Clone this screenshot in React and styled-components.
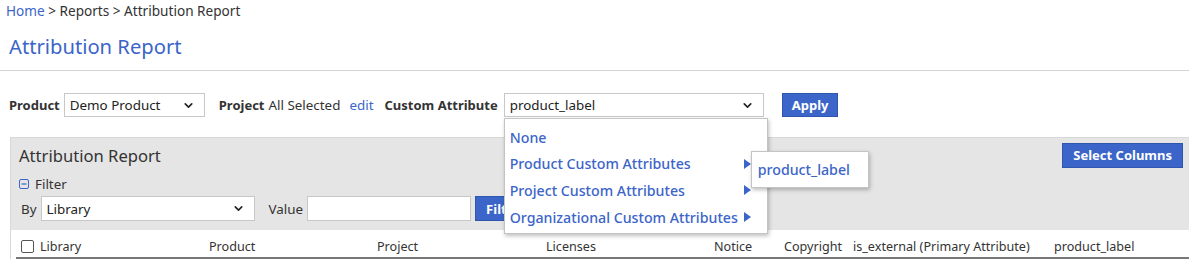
import React from 'react';
import styled, { createGlobalStyle } from 'styled-components';
import { ChevronDown } from 'lucide-react';

const BLUE = '#3b65c8';

const Global = createGlobalStyle`
    body {
        margin: 0;
        font-family: "Noto Sans", "Open Sans", "Liberation Sans", sans-serif;
        font-size: 13.4px;
        color: #333;
        background: #fff;
    }
`;

const Breadcrumb = styled.div`
    padding: 2px 6px 0;
    line-height: 17px;
    font-size: 13.6px;
    color: #333;

    a {
        color: ${BLUE};
        text-decoration: none;
    }
`;

const PageTitle = styled.h1`
    margin: 0;
    padding: 13px 9px 10px;
    font-size: 20.2px;
    line-height: 28px;
    font-weight: 400;
    color: ${BLUE};
    border-bottom: 1px solid #d3d3d3;
`;

const Toolbar = styled.div`
    display: flex;
    align-items: center;
    margin-top: 22px;
    padding-left: 9px;
    height: 24px;
`;

const Label = styled.span`
    font-weight: 700;
    font-size: 13px;
    margin-right: ${(p) => p.$gap || 4}px;
`;

const Plain = styled.span`
    margin-right: ${(p) => p.$gap || 0}px;
`;

const LinkText = styled.span`
    color: ${BLUE};
    margin-right: ${(p) => p.$gap || 0}px;
`;

const SelectBox = styled.div`
    position: relative;
    display: flex;
    align-items: center;
    justify-content: space-between;
    box-sizing: border-box;
    width: ${(p) => p.$w}px;
    height: ${(p) => p.$h || 24}px;
    padding: 0 9px 0 5px;
    margin-right: ${(p) => p.$gap || 0}px;
    background: #fff;
    border: 1px solid #c8c8c8;
    color: #222;
    font-size: 13.4px;
`;

const Button = styled.button`
    box-sizing: border-box;
    height: ${(p) => p.$h || 24}px;
    padding: 0 ${(p) => p.$px || 10}px;
    background: ${BLUE};
    border: 1px solid #2f55ad;
    color: #fff;
    font-family: inherit;
    font-size: 13px;
    font-weight: 700;
    cursor: pointer;
`;

const Menu = styled.div`
    position: absolute;
    top: 24px;
    left: -1px;
    width: 264px;
    box-sizing: border-box;
    padding: 5px 0 3px;
    background: #fff;
    border: 1px solid #c4c4c4;
    box-shadow: 1px 2px 4px rgba(0, 0, 0, 0.25);
    z-index: 10;
`;

const MenuItem = styled.div`
    position: relative;
    display: flex;
    align-items: center;
    justify-content: space-between;
    height: 26.6px;
    padding: 0 16px 0 5px;
    color: ${BLUE};
    font-size: 14.2px;
    font-weight: 500;
`;

const SubMenu = styled.div`
    position: absolute;
    left: 246px;
    top: 0;
    width: 118px;
    height: 37px;
    box-sizing: border-box;
    display: flex;
    align-items: center;
    padding-left: 6px;
    background: #fff;
    border: 1px solid #c4c4c4;
    box-shadow: 1px 2px 4px rgba(0, 0, 0, 0.25);
    font-size: 14.2px;
    color: ${BLUE};
`;

const Panel = styled.div`
    margin: 20px 0 0 10px;
    border-top: 1px solid #d8d8d8;
    border-left: 1px solid #d8d8d8;
`;

const PanelTop = styled.div`
    background: #e5e5e5;
    padding: 4px 6px 9px 8px;
`;

const PanelHeader = styled.div`
    display: flex;
    align-items: center;
    justify-content: space-between;
    height: 26px;
`;

const PanelTitle = styled.div`
    font-size: 16.6px;
    color: #333;
`;

const FilterToggle = styled.div`
    display: flex;
    align-items: center;
    gap: 6px;
    margin-top: 8px;
    line-height: 16px;
    color: #333;
`;

const FilterRow = styled.div`
    display: flex;
    align-items: center;
    margin-top: 4px;
    padding-left: 2px;
`;

const TextInput = styled.div`
    box-sizing: border-box;
    width: 164px;
    height: 25px;
    margin-right: 4px;
    background: #fff;
    border: 1px solid #c8c8c8;
`;

const TableHead = styled.div`
    display: grid;
    grid-template-columns: 188px 168px 169px 168px 70px 69px 201px 1fr;
    margin-left: 5px;
    padding-top: 8px;
    line-height: 17px;
    font-size: 12.6px;
    color: #333;
    border-bottom: 2px solid #777;
`;

const HeadCell = styled.div`
    display: flex;
    align-items: center;
    gap: 6px;
    padding-left: 5px;
    padding-bottom: 2px;
    white-space: nowrap;
`;

const Check = styled.span`
    width: 11px;
    height: 11px;
    border: 1px solid #555;
    border-radius: 2px;
    background: #fff;
`;

const Arrow = () => (
    <svg width="7" height="10" viewBox="0 0 7 10">
        <path d="M0 0 L7 5 L0 10 Z" fill={BLUE} />
    </svg>
);

const MinusBox = () => (
    <svg width="10" height="10" viewBox="0 0 10 10">
        <rect x="0.5" y="0.5" width="9" height="9" rx="1.5" fill="none" stroke={BLUE} />
        <path d="M2.5 5 H7.5" stroke={BLUE} strokeWidth="1.2" />
    </svg>
);

const Chevron = () => <ChevronDown size={13} strokeWidth={3} color="#222" />;

const columns = ['Product', 'Project', 'Licenses', 'Notice', 'Copyright', 'is_external (Primary Attribute)', 'product_label'];

export default function App() {
    return (
        <>
            <Global />
            <Breadcrumb>
                <a href="#">Home</a> &gt; Reports &gt; Attribution Report
            </Breadcrumb>
            <PageTitle>Attribution Report</PageTitle>

            <Toolbar>
                <Label>Product</Label>
                <SelectBox $w={141} $gap={14}>
                    Demo Product <Chevron />
                </SelectBox>
                <Label>Project</Label>
                <Plain $gap={9}>All Selected</Plain>
                <LinkText $gap={11}>edit</LinkText>
                <Label $gap={6}>Custom Attribute</Label>
                <SelectBox $w={260} $gap={18}>
                    product_label <Chevron />
                    <Menu>
                        <MenuItem>None</MenuItem>
                        <MenuItem>
                            Product Custom Attributes <Arrow />
                            <SubMenu>product_label</SubMenu>
                        </MenuItem>
                        <MenuItem>Project Custom Attributes <Arrow /></MenuItem>
                        <MenuItem>Organizational Custom Attributes <Arrow /></MenuItem>
                    </Menu>
                </SelectBox>
                <Button $px={9}>Apply</Button>
            </Toolbar>

            <Panel>
                <PanelTop>
                    <PanelHeader>
                        <PanelTitle>Attribution Report</PanelTitle>
                        <Button $h={25} $px={10}>Select Columns</Button>
                    </PanelHeader>
                    <FilterToggle>
                        <MinusBox /> Filter
                    </FilterToggle>
                    <FilterRow>
                        <Plain $gap={4}>By</Plain>
                        <SelectBox $w={214} $h={25} $gap={14}>
                            Library <Chevron />
                        </SelectBox>
                        <Plain $gap={4}>Value</Plain>
                        <TextInput />
                        <Button $h={25} $px={10}>Filter</Button>
                    </FilterRow>
                </PanelTop>
                <TableHead>
                    <HeadCell>
                        <Check /> Library
                    </HeadCell>
                    {columns.map((c) => (
                        <HeadCell key={c}>{c}</HeadCell>
                    ))}
                </TableHead>
            </Panel>
        </>
    );
}
